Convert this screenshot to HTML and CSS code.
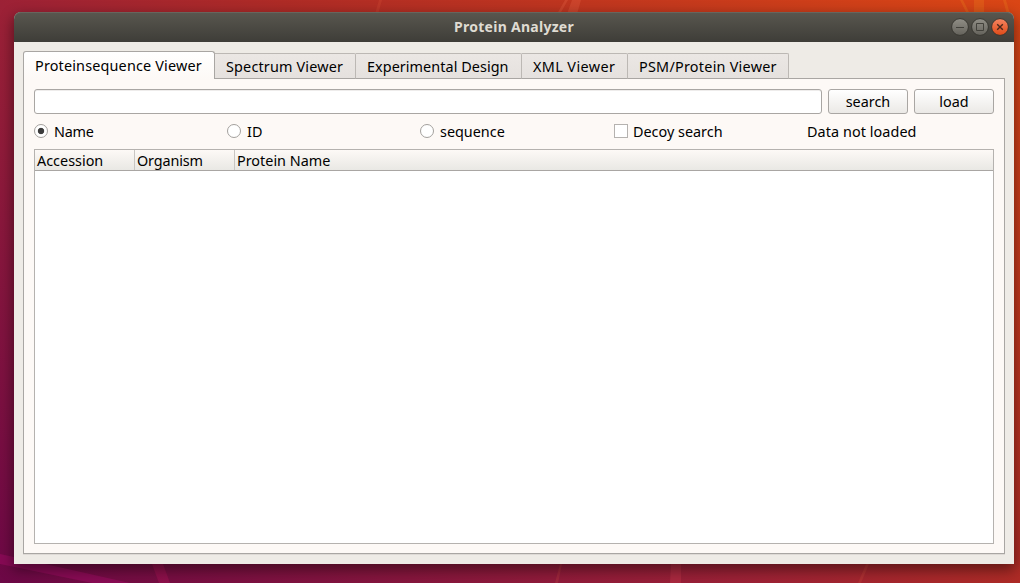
FILE: index.html
```html
<!DOCTYPE html>
<html lang="en">
<head>
<meta charset="utf-8">
<title>Protein Analyzer</title>
<link rel="stylesheet" href="styles.css">
</head>
<body>
<svg class="wallpaper" viewBox="0 0 1020 583" aria-hidden="true">
  <path d="M0 554L14 557L130 583H92L0 564Z" fill="#a00c64" opacity=".5"/>
  <path d="M152 564H163L170 583H159Z" fill="#b01458" opacity=".4"/>
  <path d="M379 0H382L378 14H375Z M560 564H562L558 583H555Z M866 564H869L861 583H858Z" fill="#f06a4a" opacity=".15"/>
  <path d="M572 0H581L577 14H567Z M565 0H568L560 14H557Z" fill="#f07050" opacity=".25"/>
  <path d="M671 564H681V583H670Z" fill="#d04050" opacity=".3"/>
  <path d="M974 0H984V14H974Z M960 0H963L970 14H967Z M1003 0H1006L1010 14H1007Z" fill="#f08a20" opacity=".25"/>
</svg>
<main class="window">
  <header class="titlebar">
    <h1 class="title">Protein Analyzer</h1>
    <svg class="controls" viewBox="0 0 60 20">
      <defs>
        <linearGradient id="grey" x2="0" y2="1"><stop stop-color="#918f87"/><stop offset="1" stop-color="#64625b"/></linearGradient>
        <linearGradient id="orange" x2="0" y2="1"><stop stop-color="#f58562"/><stop offset="1" stop-color="#df4a17"/></linearGradient>
      </defs>
      <g stroke="#373630">
        <circle cx="10" cy="10" r="8.4" fill="url(#grey)"/>
        <circle cx="30" cy="10" r="8.4" fill="url(#grey)"/>
        <circle cx="50" cy="10" r="8.4" fill="url(#orange)"/>
      </g>
      <path d="M6 10.5H14M26.5 6.5H33.5V13.5H26.5Z" fill="none" stroke="#42413b"/>
      <path d="M47.2 7.2L52.8 12.8M52.8 7.2L47.2 12.8" stroke="#4a281c" stroke-width="1.4"/>
    </svg>
  </header>
  <nav class="tabs">
    <div class="tab active">Proteinsequence Viewer</div>
    <div class="tab spectrum">Spectrum Viewer</div>
    <div class="tab design">Experimental Design</div>
    <div class="tab xml">XML Viewer</div>
    <div class="tab psm">PSM/Protein Viewer</div>
  </nav>
  <section class="pane">
    <div class="search-row">
      <input class="field" type="text" aria-label="Search">
      <button class="button">search</button>
      <button class="button">load</button>
    </div>
    <div class="options">
      <div class="option name"><i class="radio checked"></i><span>Name</span></div>
      <div class="option"><i class="radio"></i><span>ID</span></div>
      <div class="option"><i class="radio"></i><span>sequence</span></div>
      <div class="option"><i class="checkbox"></i><span>Decoy search</span></div>
      <div class="option status"><span>Data not loaded</span></div>
    </div>
    <div class="table">
      <div class="columns">
        <div class="column">Accession</div>
        <div class="column organism">Organism</div>
        <div class="column">Protein Name</div>
      </div>
    </div>
  </section>
</main>
</body>
</html>
```
FILE: styles.css
```css
* { box-sizing: border-box; }
body {
  margin: 0;
  width: 1020px;
  height: 583px;
  overflow: hidden;
  padding: 12px 6px 19px 14px;
  background: linear-gradient(38deg, #6c0846 0%, #9c2136 42%, #ae2b26 58%, #da4615 100%);
  font: 14.4px/20px "Noto Sans", sans-serif;
  color: #000;
}
.wallpaper { position: absolute; left: 0; top: 0; width: 1020px; height: 583px; }
.window {
  position: relative;
  display: flex;
  flex-direction: column;
  height: 552px;
  padding-bottom: 10px;
  border-radius: 7px 7px 0 0;
  background: #eeebe6;
  box-shadow: 0 5px 14px 1px rgba(0, 0, 0, .45);
}
.titlebar {
  display: grid;
  grid-template-columns: 64px 1fr 60px;
  align-items: center;
  height: 30px;
  padding-right: 4px;
  border-radius: 7px 7px 0 0;
  background: linear-gradient(#59574f, #3e3d38);
  box-shadow: inset 0 1px #67655d;
}
.title {
  grid-column: 2;
  margin: 0;
  font-size: 14px;
  line-height: 20px;
  letter-spacing: .27px;
  text-align: center;
  color: #dfdbd2;
}
.controls { width: 60px; height: 20px; }
.tabs {
  position: relative;
  z-index: 1;
  display: flex;
  align-items: flex-end;
  height: 37px;
  margin: 0 9px -1px;
}
.tab {
  height: 26px;
  padding: 3px 0 0 11px;
  border: 1px solid #bcb8b4;
  border-left: 0;
  border-bottom-color: #a9a6a3;
  border-radius: 0 2px 0 0;
  background: linear-gradient(#ebe7e4, #e5e1de);
  white-space: nowrap;
}
.active {
  width: 192px;
  height: 28px;
  padding-top: 4px;
  border: 1px solid #a9a6a3;
  border-bottom: 0;
  border-radius: 3px 3px 0 0;
  background: linear-gradient(#fff, #fdf9f6);
  letter-spacing: .17px;
}
.spectrum { width: 141px; letter-spacing: .17px; }
.design { width: 166px; letter-spacing: .06px; }
.xml { width: 106px; letter-spacing: .4px; }
.psm { width: 161px; letter-spacing: .25px; }
.pane {
  flex: 1;
  display: flex;
  flex-direction: column;
  margin: 0 9px;
  padding: 10px 10px 9px;
  border: 1px solid #a9a6a3;
  background: #fdf9f6;
  box-shadow: 0 1px #dedad6;
}
.search-row { display: flex; gap: 6px; height: 25px; }
.field {
  flex: 1;
  border: 1px solid #a9a6a3;
  border-radius: 3px;
  background: #fff;
  box-shadow: inset 0 1px #eeeceb;
}
.button {
  width: 80px;
  padding: 0;
  border: 1px solid #a9a6a3;
  border-radius: 3px;
  background: linear-gradient(#fff, #ebe9e6);
  font: inherit;
  color: #000;
}
.options {
  display: grid;
  grid-template-columns: 193px 193px 194px 193px 1fr;
  height: 35px;
  padding-top: 7px;
}
.option { display: flex; height: 20px; line-height: 22px; }
.name { letter-spacing: -.2px; }
.status { letter-spacing: .07px; }
.radio, .checkbox {
  width: 14px;
  height: 14px;
  margin: 3px 6px 0 0;
  border: 1px solid #a3a09d;
  background: #fff;
}
.radio { border-radius: 50%; }
.checked { background: radial-gradient(circle, #3c3c3c 0 2.8px, #fff 3.6px); }
.checkbox { margin-right: 5px; border-color: #b5b2af; }
.table { flex: 1; border: 1px solid #b5b2af; background: #fff; }
.columns {
  display: grid;
  grid-template-columns: 100px 100px 1fr;
  height: 21px;
  border-bottom: 1px solid #a9a6a3;
  background: linear-gradient(#fdf9f6, #e9e8e4);
}
.column {
  height: 20px;
  padding-left: 2px;
  border-right: 1px solid #c9c6c2;
  line-height: 22px;
}
.column:last-child { border-right: 0; }
.organism { letter-spacing: -.12px; }
```
